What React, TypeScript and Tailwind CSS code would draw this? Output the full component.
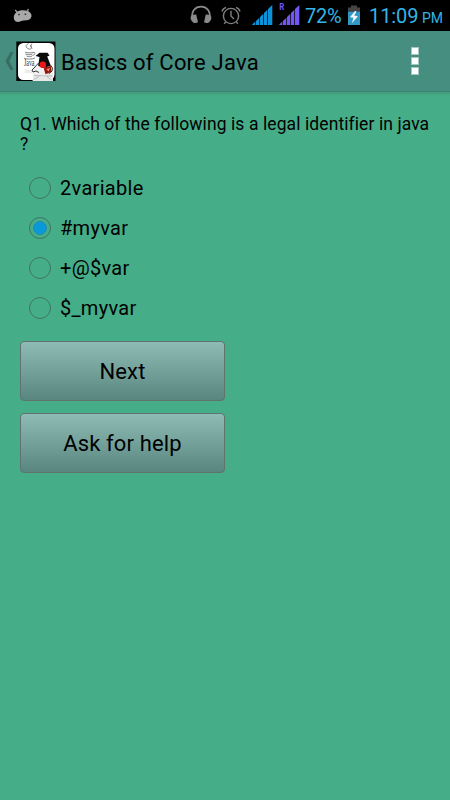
import { useState } from "react";

const OPTIONS = ["2variable", "#myvar", "+@$var", "$_myvar"];

function AndroidHead() {
  return (
    <svg width="20" height="16" viewBox="0 0 20 16" className="shrink-0">
      <path d="M2.200 2l2.600 3M15.200.8l-.8 3.700" stroke="#a4a4a4" strokeWidth="1.300" />
      <path d="M4.500 3.500C7 2 12 1.800 14.700 3c2.800 1.200 4.200 3.200 3.700 5.600-.5 2.600-2.400 3.600-4.800 3.700-2.200.2-4.200.3-6 .9-2.200 1.100-5 .9-6-.9C-.1 10 .8 5.500 4.500 3.500z" fill="#a9a9a9" />
      <path d="M5.200 5.800h1.600v1.500H5.200zM11.600 5.500h1.600V7h-1.600z" fill="#333" />
    </svg>
  );
}

function Headphones() {
  return (
    <svg width="22" height="20" viewBox="0 0 22 20" className="shrink-0">
      <path d="M2.400 13.500C1 6 5.500 1.700 11 1.700S21 6 19.600 13.500" fill="none" stroke="#8a8a8a" strokeWidth="1.800" />
      <path d="M.8 11.500c1.200-1.700 3.700-2.400 5.400-1.900l1.800 7.600c-1.300.9-3.800 1-4.800.2C1.400 16 .1 13.800.8 11.500zM21.200 11.500c-1.200-1.700-3.700-2.400-5.400-1.900L14 17.200c1.300.9 3.800 1 4.800.2 1.800-1.400 3.100-3.600 2.400-5.900z" fill="#8a8a8a" />
    </svg>
  );
}

function AlarmClock() {
  return (
    <svg width="20" height="20" viewBox="0 0 20 20" className="shrink-0" fill="none" stroke="#808080">
      <circle cx="10" cy="11" r="7.600" strokeWidth="1.400" />
      <path d="M10 5.800V11l3 3" strokeWidth="1.400" />
      <path d="M1 6.500C1.500 4.500 3 3 5 2.300M15 2.300c2 .7 3.500 2.200 4 4.200M4.600 17l-1.400 1.700M15.400 17l1.400 1.700" strokeWidth="1.400" />
    </svg>
  );
}

function SignalBars({ color, roaming }: { color: string; roaming?: boolean }) {
  return (
    <svg width="21" height="23" viewBox="0 0 21 23" className="shrink-0">
      <path
        d="M-.3 22l3.600-3.400V22zM4 22v-4.100l3.300-3.100V22zM8 22v-8l3.300-3.200V22zM12 22V10l3.300-3.300V22zM16 22V6l4.300-4V22z"
        fill={color}
      />
      {roaming && (
        <text x=".2" y="7.200" fontSize="8.500" textLength="5" lengthAdjust="spacingAndGlyphs" fontWeight="bold" fontFamily="Roboto, sans-serif" fill={color}>
          R
        </text>
      )}
    </svg>
  );
}

function Battery() {
  return (
    <svg width="14" height="21" viewBox="0 0 14 21" className="shrink-0">
      <path d="M4 .5h6v2h3v4H1v-4h3z" fill="#454545" />
      <path d="M1 6.500h12V20H1z" fill="#3197c4" />
      <path d="M8 6L3 12.200l3.500.6-1.600 5.500 6-7-3.700-.8L9.500 6.200z" fill="#f4f8fa" />
    </svg>
  );
}

function AppIcon() {
  return (
    <svg width="40" height="41" viewBox="0 0 40 41" className="shrink-0">
      <rect x=".3" y=".5" width="39.200" height="39.500" fill="#050505" />
      <rect x="2" y="2" width="36.500" height="37" rx="5.500" fill="#fff" />
      {/* coffee cup */}
      <g fill="none" stroke="#777" strokeWidth=".9">
        <path d="M12.500 2.500c-4 2-2.500 4.500.5 5.500s3.500-3 1-3.500M16 2.500c-1.500 2-1.500 3.500 0 5" />
        <path d="M9 11.200c2 .9 6 .9 8 0M9.500 13c2 1 5 1 7 0M10.500 15c2 .9 4 .9 5.500 0M17 11.500c3-.5 2.500 2.500-.5 3" />
        <path d="M8 17.200c3.500 1.300 8 1.200 11-.3" />
      </g>
      <text x="8" y="24.700" fontSize="9.500" textLength="10.500" lengthAdjust="spacingAndGlyphs" fontFamily="Liberation Serif, serif" fill="#333">
        Java
      </text>
      <text x="8.500" y="32" fontSize="6.500" textLength="7.500" lengthAdjust="spacingAndGlyphs" fontFamily="Liberation Serif, serif" fill="#ccc">
        Java
      </text>
      {/* Duke reading */}
      <path d="M19.500 15l4-3.300h8l2 2.700-2.300 1.200 3.200 8v4L27 29l-5.500-2 1-4.500L23.500 16z" fill="#0b0b0b" />
      <path d="M18 26l4-1.500 4.500 2.500 8-2 3 2.500-.8 12.500H18.500L17 35l-1-6z" fill="#f0f0f0" />
      <path d="M27.500 26.500l7.500-1.500.5 6-6 2.200z" fill="#9a170d" />
      <path d="M30.500 28l3.500-.8-1.500 3.300z" fill="#e59a80" />
      <circle cx="26.800" cy="23.700" r="3.300" fill="#ed1717" />
      <path d="M22.500 22L18 27l-2 2 1 2 3-1 3 1.500M34.500 24l2 3-.5 3-3.500 3" fill="none" stroke="#222" strokeWidth=".9" />
      <path d="M18 33l5 .5 4 2.500 5-3 5 .5v6.500H16.500z" fill="#e8e8e8" />
      <path d="M18 34.500l18 .5M17.500 38.500l5.500-3M31 35.500l4.500 3.500" fill="none" stroke="#aaa" strokeWidth=".7" />
    </svg>
  );
}

function StatusBar() {
  return (
    <div className="flex h-[31px] items-start bg-black text-[#33b5e5]">
      <div className="ml-[13px] mt-2">
        <AndroidHead />
      </div>
      <div className="ml-[157px] mt-[5px]">
        <Headphones />
      </div>
      <div className="ml-[9px] mt-[5px]">
        <AlarmClock />
      </div>
      <div className="ml-[11px] mt-[3px]">
        <SignalBars color="#0b92d8" />
      </div>
      <div className="ml-[6px] mt-[3px]">
        <SignalBars color="#7357f2" roaming />
      </div>
      <span className="ml-[5px] mt-1 w-[42px] whitespace-nowrap text-[20px] leading-6 tracking-[-0.2px]">72%</span>
      <div className="mt-[5px]">
        <Battery />
      </div>
      <span className="ml-[8px] mt-1 w-[53px] whitespace-nowrap text-[20px] leading-6 tracking-[-0.1px]">11:09</span>
      <span className="mt-[7px] whitespace-nowrap text-[14px] leading-[22px]">PM</span>
    </div>
  );
}

function ActionBar() {
  return (
    <header className="flex h-[61px] items-center border-b border-[#3c8271] bg-[#458e80]">
      <svg width="10" height="18" viewBox="0 0 10 18" className="ml-[4px] shrink-0">
        <path d="M6.500 0h3L5.300 9l4.200 9h-3L1.500 9z" fill="#376d62" />
      </svg>
      <div className="ml-[2px]">
        <AppIcon />
      </div>
      <h1 className="ml-[5px] flex-1 whitespace-nowrap pt-[3px] text-[22px] leading-7 tracking-[0.2px]">
        Basics of Core Java
      </h1>
      <button className="mr-[31px] flex flex-col gap-[2px]" aria-label="More options">
        <span className="h-2 w-2 border border-[#a3c8c0] bg-white" />
        <span className="h-2 w-2 border border-[#a3c8c0] bg-white" />
        <span className="h-2 w-2 border border-[#a3c8c0] bg-white" />
      </button>
    </header>
  );
}

function RadioRow({ label, checked, onSelect }: { label: string; checked: boolean; onSelect: () => void }) {
  return (
    <button onClick={onSelect} role="radio" aria-checked={checked} className="flex h-10 items-center">
      <span className="flex h-[22px] w-[22px] items-center justify-center rounded-full border border-[#3f7562]">
        {checked && (
          <span className="h-[14px] w-[14px] rounded-full border border-[#2f86b0] bg-[#0799d8]" />
        )}
      </span>
      <span className="ml-[9px] whitespace-nowrap text-[20px] leading-6 tracking-[0.3px]">{label}</span>
    </button>
  );
}

function FormButton({ children }: { children: string }) {
  return (
    <button className="h-[60px] w-[205px] rounded-[4px] border border-[#60736f] bg-gradient-to-b from-[#8ebcb5] to-[#5a8680] pt-[2px] text-[22px] leading-7 tracking-[0.15px]">
      {children}
    </button>
  );
}

export default function App() {
  const [selected, setSelected] = useState(1);

  return (
    <div className="flex h-[800px] w-[450px] flex-col overflow-hidden bg-[#45ad88] font-['Roboto',sans-serif] text-black">
      <StatusBar />
      <ActionBar />
      <div className="h-[4px] shrink-0 bg-gradient-to-b from-[#419b7c] to-[#45ad88]" />
      <main className="flex flex-col items-start pl-[20px] pt-[18px]">
        <p className="whitespace-nowrap text-[17.5px] leading-5 tracking-[0.09px]">
          Q1. Which of the following is a legal identifier in java
          <br />?
        </p>
        <div role="radiogroup" className="ml-[9px] mt-[14px] flex flex-col">
          {OPTIONS.map((option, i) => (
            <RadioRow key={option} label={option} checked={i === selected} onSelect={() => setSelected(i)} />
          ))}
        </div>
        <div className="mt-[13px] flex flex-col gap-[12px]">
          <FormButton>Next</FormButton>
          <FormButton>Ask for help</FormButton>
        </div>
      </main>
    </div>
  );
}
